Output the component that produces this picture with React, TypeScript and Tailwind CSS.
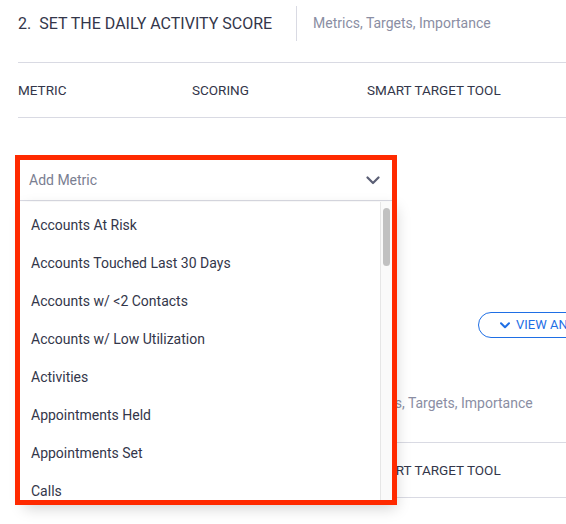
import React from "react";

const items = [
  "Accounts At Risk",
  "Accounts Touched Last 30 Days",
  "Accounts w/ <2 Contacts",
  "Accounts w/ Low Utilization",
  "Activities",
  "Appointments Held",
  "Appointments Set",
  "Calls",
];

function SectionHeader({ title, titleW, hidden }: { title: string; titleW: string; hidden?: boolean }) {
  return (
    <>
      <div className="pt-[6px] pb-[21px] border-b border-[#d9dae3]">
        <div className="flex items-center h-[35px]">
          <div className={`${titleW} text-[16px] text-[#33364a] whitespace-pre`}>{hidden ? "" : title}</div>
          <div className="w-px h-[35px] bg-[#d9dae3]" />
          <div className="pl-[16px] text-[14px] text-[#8a8ea3] whitespace-nowrap">Metrics, Targets, Importance</div>
        </div>
      </div>
      <div className="h-[55px] flex items-center border-b border-[#d9dae3] text-[13.5px] text-[#33364a] whitespace-nowrap">
        <div className="w-[174px]">{hidden ? "" : "METRIC"}</div>
        <div className="w-[175px]">{hidden ? "" : "SCORING"}</div>
        <div>SMART TARGET TOOL</div>
      </div>
    </>
  );
}

export default function App() {
  return (
    <div
      className="relative w-[566px] h-[524px] overflow-hidden bg-white"
      style={{ fontFamily: "'Roboto', 'Noto Sans', sans-serif" }}
    >
      <div className="ml-[18px] w-[600px]">
        <SectionHeader title="2.  SET THE DAILY ACTIVITY SCORE" titleW="w-[278px]" />
        <div className="relative mt-[42px] ml-[2px] w-[372px]">
          <div className="h-[41px] flex items-center justify-between pl-[9px] pr-[12px] border-b border-[#d9dae3] bg-white">
            <span className="text-[14px] text-[#7a7e91]">Add Metric</span>
            <svg width="14" height="9" viewBox="0 0 14 9" fill="none">
              <path d="M1.5 1.5 L7 7 L12.5 1.5" stroke="#5b5f75" strokeWidth="2.2" strokeLinecap="round" strokeLinejoin="round" />
            </svg>
          </div>
          <div className="absolute left-0 top-[42px] w-[372px] h-[300px] bg-white shadow-[4px_6px_14px_rgba(0,0,0,0.18)] z-10 flex overflow-hidden">
            <div className="flex-1 pt-[4px]">
              {items.map((t) => (
                <div key={t} className="h-[38px] flex items-center pl-[11px] text-[14px] text-[#33364a] whitespace-nowrap">
                  {t}
                </div>
              ))}
            </div>
            <div className="w-[12px] border-l border-[#e6e6e6] bg-[#fafafa] pt-[6px] pl-[2px]">
              <div className="w-[7px] h-[58px] rounded-full bg-[#c1c1c1]" />
            </div>
          </div>
        </div>
        <div className="mt-[111px] pl-[460px]">
          <div className="h-[26px] w-[140px] rounded-full border-[1.5px] border-[#1f6fe5] flex items-center pl-[21px] gap-[6px] text-[#1f6fe5] text-[13px] whitespace-nowrap">
            <svg width="10" height="7" viewBox="0 0 10 7" fill="none">
              <path d="M1 1.2 L5 5.2 L9 1.2" stroke="#1f6fe5" strokeWidth="2" strokeLinecap="round" strokeLinejoin="round" />
            </svg>
            <span>VIEW ANALYSIS</span>
          </div>
        </div>
        <div className="mt-[42px]">
          <SectionHeader title="3.  SET THE WEEKLY ACTIVITY SCORE" titleW="w-[320px]" hidden />
        </div>
      </div>
      <div className="absolute left-[15px] top-[155px] w-[382px] h-[350px] border-[5px] border-[#ff2a00] z-20 pointer-events-none" />
    </div>
  );
}
